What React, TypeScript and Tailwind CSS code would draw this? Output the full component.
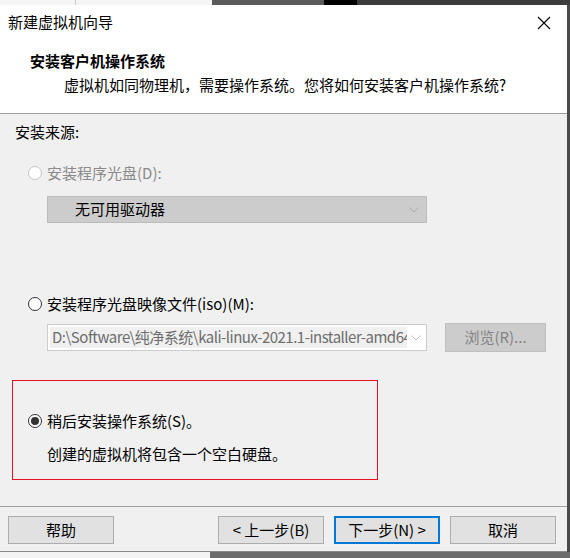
import React from "react";

const font = { fontFamily: '"Noto Sans CJK SC", "Noto Sans", sans-serif' };

function Radio({ checked = false, disabled = false }: { checked?: boolean; disabled?: boolean }) {
  return (
    <span
      className={`flex h-[14px] w-[14px] shrink-0 items-center justify-center rounded-full border bg-white ${
        disabled ? "border-[#c4c4c4]" : "border-[#333333]"
      }`}
    >
      {checked && <span className="h-[8px] w-[8px] rounded-full bg-[#333333]" />}
    </span>
  );
}

function Chevron({ color = "#c0c0c0" }: { color?: string }) {
  return (
    <svg width="10" height="6" viewBox="0 0 10 6" fill="none">
      <path d="M0.5 0.5 L5 5 L9.5 0.5" stroke={color} strokeWidth="1" />
    </svg>
  );
}

function Btn({ label, primary = false, className = "" }: { label: string; primary?: boolean; className?: string }) {
  return (
    <div
      className={`flex h-[28px] w-[106px] items-center justify-center bg-[#e1e1e1] text-[15px] text-black ${
        primary ? "border-2 border-[#0078d7]" : "border border-[#adadad]"
      } ${className}`}
    >
      {label}
    </div>
  );
}

export default function App() {
  return (
    <div className="flex h-[558px] w-[570px] flex-col overflow-hidden bg-[#f3f3f3]" style={font}>
      {/* desktop strip above the window */}
      <div className="flex h-[5px] shrink-0">
        <div className="w-[75px] bg-[#f5f5f5]" />
        <div className="w-px bg-[#c8c8c8]" />
        <div className="w-[136px] bg-[#f5f5f5]" />
        <div className="w-[112px] bg-[#5a5a5a]" />
        <div className="w-[33px] bg-[#000000]" />
        <div className="flex-1 bg-[#3c3c3c]" />
      </div>

      <div className="flex flex-1">
        {/* dialog */}
        <div className="flex h-[547px] w-[567px] flex-col border-b border-[#888888] bg-[#f0f0f0]">
          {/* title bar */}
          <div className="flex h-[35px] items-center justify-between bg-white pl-[8px] pr-[16px]">
            <span className="text-[15px] text-black">新建虚拟机向导</span>
            <svg width="14" height="14" viewBox="0 0 14 14">
              <path d="M1 1 L13 13 M13 1 L1 13" stroke="#000" strokeWidth="1.1" />
            </svg>
          </div>

          {/* header */}
          <div className="flex h-[74px] flex-col border-b border-[#a0a0a0] bg-white pl-[30px] pt-[10px]">
            <span className="h-[22px] text-[15px] font-bold leading-[22px] text-black">安装客户机操作系统</span>
            <span className="ml-[34px] mt-[2px] h-[22px] text-[15px] leading-[22px] text-black">
              虚拟机如同物理机，需要操作系统。您将如何安装客户机操作系统?
            </span>
          </div>

          {/* body */}
          <div className="flex h-[393px] flex-col border-b border-[#a0a0a0] px-[12px]">
            <span className="ml-[3px] mt-[8px] h-[20px] text-[15px] leading-[20px] text-black">安装来源:</span>

            <div className="ml-[16px] mt-[21px] flex h-[20px] items-center gap-[5px]">
              <Radio disabled />
              <span className="text-[15px] text-[#8a8a8a]">安装程序光盘(D):</span>
            </div>

            <div className="ml-[35px] mt-[13px] flex h-[27px] w-[380px] items-center justify-between border border-[#bcbcbc] bg-[#cccccc] pl-[27px] pr-[7px]">
              <span className="text-[15px] text-black">无可用驱动器</span>
              <Chevron color="#a8a8a8" />
            </div>

            <div className="ml-[16px] mt-[71px] flex h-[20px] items-center gap-[5px]">
              <Radio />
              <span className="text-[15px] text-black">安装程序光盘映像文件(iso)(M):</span>
            </div>

            <div className="mt-[9px] flex items-center">
              <div className="ml-[35px] flex h-[27px] w-[380px] items-center border border-[#cccccc] bg-white p-[2px]">
                <div className="flex h-full w-[357px] items-center overflow-hidden whitespace-nowrap bg-[#f0f0f0] pl-[2px] text-[15px] tracking-[-0.5px] text-[#6d6d6d]">
                  D:\Software\纯净系统\kali-linux-2021.1-installer-amd64
                </div>
                <div className="flex flex-1 justify-center">
                  <Chevron />
                </div>
              </div>
              <div className="ml-[18px] flex h-[29px] w-[101px] items-center justify-center border border-[#bfbfbf] bg-[#cccccc] text-[15px] text-[#838383]">
                浏览(R)...
              </div>
            </div>

            <div className="mt-[28px] flex h-[100px] w-[366px] flex-col border border-[#e81123]">
              <div className="ml-[15px] mt-[30px] flex h-[20px] items-center gap-[5px]">
                <Radio checked />
                <span className="text-[15px] text-black">稍后安装操作系统(S)。</span>
              </div>
              <span className="ml-[34px] mt-[13px] h-[20px] text-[15px] leading-[20px] text-black">
                创建的虚拟机将包含一个空白硬盘。
              </span>
            </div>
          </div>

          {/* buttons */}
          <div className="flex flex-1 items-start pl-[8px] pt-[9px]">
            <Btn label="帮助" />
            <Btn label="< 上一步(B)" className="ml-[104px]" />
            <Btn label="下一步(N) >" primary className="ml-[10px]" />
            <Btn label="取消" className="ml-[10px]" />
          </div>
        </div>
        <div className="flex-1 bg-[#4a4a4a]" />
      </div>

      {/* desktop strip below */}
      <div className="flex h-[6px] shrink-0">
        <div className="w-[210px] bg-[#f3f3f3]" />
        <div className="flex-1 bg-[#6b6b6b]" />
      </div>
    </div>
  );
}
